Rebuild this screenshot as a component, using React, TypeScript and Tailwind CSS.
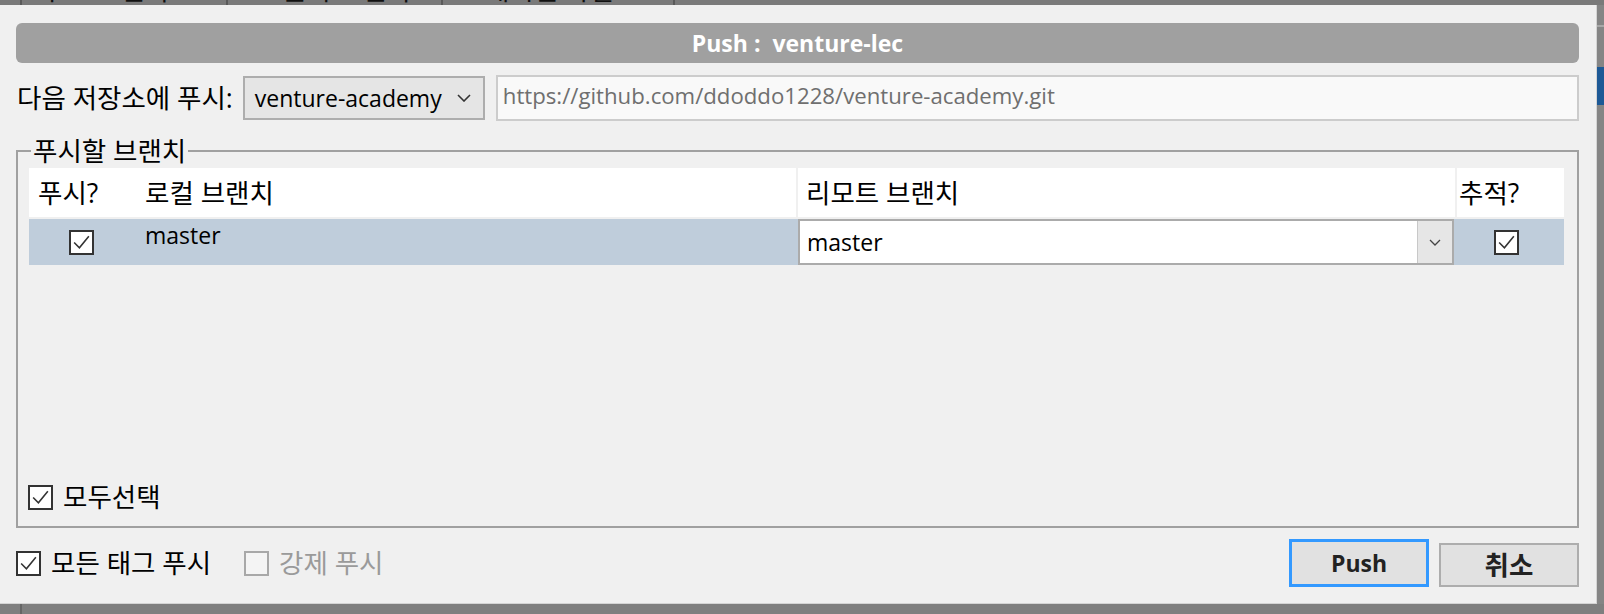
import React from "react";

const ko = "text-[26.5px] leading-[30px]";

const CheckBox = ({ checked, disabled }: { checked?: boolean; disabled?: boolean }) => (
  <span
    className={
      disabled
        ? "flex h-[25px] w-[25px] shrink-0 items-center justify-center border-2 border-[#a8a8a8] bg-[#f4f4f4]"
        : "flex h-[25px] w-[25px] shrink-0 items-center justify-center border-2 border-[#333333] bg-white"
    }
  >
    {checked && (
      <svg width="21" height="21" viewBox="0 0 20 20" fill="none" stroke="#333333" strokeWidth="1.5">
        <polyline points="3,10 8,15 17,4" />
      </svg>
    )}
  </span>
);

const Chevron = ({ small }: { small?: boolean }) =>
  small ? (
    <svg width="12" height="7" viewBox="0 0 12 7" fill="none" stroke="#444" strokeWidth="1.3">
      <polyline points="1,1 6,6 11,1" />
    </svg>
  ) : (
    <svg width="14" height="8" viewBox="0 0 14 8" fill="none" stroke="#333" strokeWidth="1.6">
      <polyline points="1,1 7,7 13,1" />
    </svg>
  );

const TopStrip = () => (
  <div className="h-[5px] shrink-0 overflow-hidden bg-[#7a7a7a]">
    <div className="-mt-[25px] flex h-[30px] items-center text-[#111]">
      <div className="ml-[20px] flex h-full items-center border-l-2 border-[#5a5a5a] pl-[18px] pr-[18px]">
        <span className={ko}>부트 브랜치</span> <span className="ml-[20px]">⌄</span>
      </div>
      <div className="flex h-full items-center border-l-2 border-[#5a5a5a] pl-[26px] pr-[30px]">
        <span className="mr-[10px] h-[18px] w-[18px] border-2 border-[#111]" />
        <span className={ko}>원격 브랜치</span>
      </div>
      <div className="flex h-full items-center border-l-2 border-[#5a5a5a] pl-[18px] pr-[20px]">
        <span className={ko}>스태시된 파일</span> <span className="ml-[20px]">⌄</span>
      </div>
      <div className="h-full border-l-2 border-[#5a5a5a]" />
    </div>
  </div>
);

const RightStrip = () => (
  <div className="flex flex-1 flex-col bg-[#858585]">
    <div className="h-[20px]" />
    <div className="h-[2px] bg-[#a8a8a8]" />
    <div className="h-[40px]" />
    <div className="h-[38px] bg-[#1d5996]" />
  </div>
);

const Dialog = () => (
  <div className="flex w-[1597px] shrink-0 flex-col border-b border-r border-[#d4d4d4] bg-[#f0f0f0] pb-[16px] pl-[16px] pr-[17px] pt-[18px]">
    {/* title */}
    <div className="flex h-[40px] items-center justify-center rounded-[6px] bg-[#a0a0a0] text-[23px] font-bold text-white">
      <span className="whitespace-pre">Push :  venture-lec</span>
    </div>

    {/* remote */}
    <div className="mt-[12px] flex h-[46px] items-center">
      <span className={`${ko} ml-[1px] whitespace-nowrap`}>다음 저장소에 푸시:</span>
      <div className="ml-[10px] flex h-[44px] w-[242px] items-center justify-between border-2 border-[#adadad] bg-[#e5e5e5] pl-[10px] pr-[12px]">
        <span>venture-academy</span>
        <Chevron />
      </div>
      <div className="ml-[11px] h-[46px] flex-1 border-2 border-[#cccccc] bg-[#f9f9f9] pl-[5px] pt-[2px] text-[22.2px] text-[#6f6f6f]">
        https://github.com/ddoddo1228/venture-academy.git
      </div>
    </div>

    {/* branches */}
    <fieldset className="mt-[15px] border-2 border-[#a0a0a0] pl-[11px] pr-[13px]">
      <legend className={`${ko} ml-[2px] px-[2px]`}>푸시할 브랜치</legend>
      <div className="flex h-[360px] flex-col justify-between pb-[14px] pt-[2px]">
        <div className="flex flex-col gap-[2px]">
          <div className={`${ko} flex h-[49px] items-center bg-white`}>
            <div className="w-[102px] pl-[9px]">푸시?</div>
            <div className="w-[665px] pl-[14px]">로컬 브랜치</div>
            <div className="flex h-full w-[659px] items-center border-l-2 border-[#f0f0f0] pl-[8px]">리모트 브랜치</div>
            <div className="flex h-full flex-1 items-center border-l-2 border-[#f0f0f0] pl-[2px]">추적?</div>
          </div>
          <div className="flex h-[46px] bg-[#bfcddb]">
            <div className="flex w-[102px] items-center pl-[40px]">
              <CheckBox checked />
            </div>
            <div className="w-[665px] pl-[14px] pt-[1px] leading-[30px]">master</div>
            <div className="flex w-[659px] pl-[2px] pr-[1px]">
              <div className="flex flex-1 border-2 border-[#ababab] bg-white">
                <div className="flex flex-1 items-center pl-[7px]">master</div>
                <div className="flex w-[35px] items-center justify-center border-l border-[#c8c8c8] bg-[#e6e6e6]">
                  <Chevron small />
                </div>
              </div>
            </div>
            <div className="flex flex-1 items-center pl-[39px]">
              <CheckBox checked />
            </div>
          </div>
        </div>
        <div className="-ml-[1px] flex items-center gap-[10px]">
          <CheckBox checked />
          <span className={ko}>모두선택</span>
        </div>
      </div>
    </fieldset>

    {/* footer */}
    <div className="mt-[11px] flex h-[48px] items-center">
      <CheckBox checked />
      <span className={`${ko} ml-[10px]`}>모든 태그 푸시</span>
      <span className="ml-[33px]">
        <CheckBox disabled />
      </span>
      <span className={`${ko} ml-[10px] text-[#9a9a9a]`}>강제 푸시</span>
      <div className="ml-auto flex h-full items-end gap-[10px]">
        <button className="flex h-[48px] w-[140px] items-center justify-center border-[3px] border-[#3399ff] bg-[#e1e1e1] font-bold text-[#222]">
          Push
        </button>
        <button className={`${ko} flex h-[44px] w-[140px] items-center justify-center border-2 border-[#adadad] bg-[#e1e1e1] font-bold text-[#222]`}>
          취소
        </button>
      </div>
    </div>
  </div>
);

export default function App() {
  return (
    <div className="flex h-[614px] w-[1604px] flex-col overflow-hidden bg-[#7f7f7f] font-['Open_Sans','Noto_Sans_CJK_KR',sans-serif] text-[23px] text-black">
      <TopStrip />
      <div className="flex">
        <Dialog />
        <RightStrip />
      </div>
      <div className="flex flex-1 bg-[#7f7f7f]">
        <div className="ml-[20px] w-[2px] bg-[#666]" />
      </div>
    </div>
  );
}
